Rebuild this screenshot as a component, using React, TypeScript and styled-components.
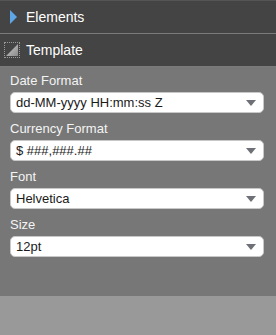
import styled, { createGlobalStyle } from 'styled-components';

const FIELDS = [
  { label: 'Date Format', value: 'dd-MM-yyyy HH:mm:ss Z' },
  { label: 'Currency Format', value: '$ ###,###.##' },
  { label: 'Font', value: 'Helvetica' },
  { label: 'Size', value: '12pt' },
];

const GlobalStyle = createGlobalStyle`
  html, body {
    margin: 0;
    padding: 0;
    background: #999;
  }

  body {
    font-family: 'Liberation Sans', Arial, sans-serif;
  }
`;

export default function App() {
  return (
    <>
      <GlobalStyle />
      <Sidebar>
        <Header $first>
          <ExpandArrow viewBox='0 0 8 14' width={8} height={14}>
            <path d='M0 0 L7 7 L0 14 Z' fill='#5ea6e6' />
          </ExpandArrow>
          Elements
        </Header>
        <Header>
          <OpenIcon>
            <svg viewBox='0 0 12 12' width={12} height={12}>
              <defs>
                <linearGradient id='tri' x1='0' y1='0' x2='1' y2='1'>
                  <stop offset='0' stopColor='#d0d0d0' />
                  <stop offset='1' stopColor='#8a8a8a' />
                </linearGradient>
              </defs>
              <path d='M12 0 L12 12 L0 12 Z' fill='url(#tri)' />
            </svg>
          </OpenIcon>
          Template
        </Header>
        <Panel>
          {FIELDS.map((field) => (
            <Field key={field.label}>
              <Label>{field.label}</Label>
              <Select>
                <span>{field.value}</span>
                <Caret viewBox='0 0 10 6' width={10} height={6}>
                  <path d='M0 0 L10 0 L5 6 Z' fill='#6d7076' />
                </Caret>
              </Select>
            </Field>
          ))}
        </Panel>
      </Sidebar>
    </>
  );
}

const Sidebar = styled.div`
  width: 276px;
  display: flex;
  flex-direction: column;
`;

const Header = styled.div<{ $first?: boolean }>`
  height: 33px;
  box-sizing: border-box;
  background-color: #444;
  border-top: 1px solid ${(p) => (p.$first ? '#555' : '#7a7a7a')};
  color: #fff;
  font-size: 14px;

  display: flex;
  align-items: center;
  gap: 6px;
  padding-left: ${(p) => (p.$first ? '10px' : '4px')};
`;

const ExpandArrow = styled.svg`
  margin-right: 2px;
`;

const OpenIcon = styled.div`
  width: 16px;
  height: 16px;
  box-sizing: border-box;
  border: 1px dotted #9a9a9a;

  display: flex;
  align-items: flex-end;
  justify-content: flex-end;
  padding: 1px;
`;

const Panel = styled.div`
  background-color: #777;
  border-top: 1px solid #7a7a7a;
  padding: 5px 12px 39px 10px;

  display: flex;
  flex-direction: column;
  gap: 7px;
`;

const Field = styled.div`
  display: flex;
  flex-direction: column;
  gap: 2px;
`;

const Label = styled.div`
  color: #f4f4f4;
  font-size: 13px;
  line-height: 18px;
`;

const Select = styled.div`
  height: 21px;
  box-sizing: border-box;
  background-color: #fff;
  border: 1px solid #c8c8c8;
  border-radius: 5px;
  color: #1a1a1a;
  font-size: 13px;

  display: flex;
  align-items: center;
  justify-content: space-between;
  padding: 0 7px 0 5px;
`;

const Caret = styled.svg`
  display: block;
`;
